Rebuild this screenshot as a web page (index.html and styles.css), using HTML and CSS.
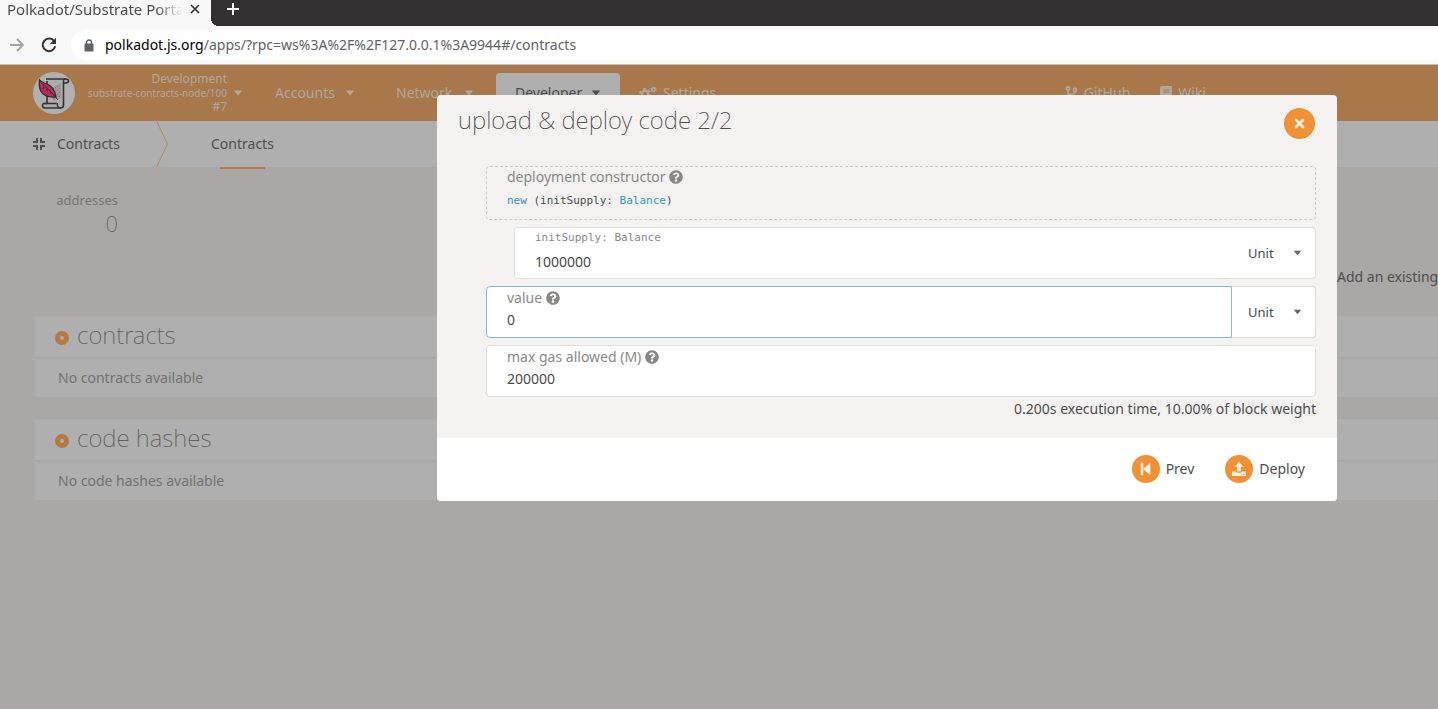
FILE: index.html
```html
<!DOCTYPE html>
<html lang="en">
<head>
<meta charset="utf-8">
<title>Polkadot/Substrate Portal</title>
<link rel="stylesheet" href="styles.css">
</head>
<body>
<svg class="symbols" aria-hidden="true">
  <symbol id="help" viewBox="0 0 512 512"><path d="M504 256c0 137-111 248-248 248S8 393 8 256 119 8 256 8s248 111 248 248zM262.700 90c-54.500 0-89.300 23-116.500 63.800-3.500 5.300-2.400 12.400 2.700 16.300l34.700 26.300c5.200 3.900 12.600 3 16.700-2.100 17.900-22.700 30.100-35.800 57.300-35.800 20.400 0 45.700 13.100 45.700 33 0 15-12.400 22.700-32.500 34C247.100 238.500 216 255 216 296v4c0 6.600 5.400 12 12 12h56c6.600 0 12-5.400 12-12v-1.300c0-28.700 84-29.900 84-107.700 0-58.600-60.800-101-117.300-101zM256 338c-25.400 0-46 20.600-46 46s20.600 46 46 46 46-20.600 46-46-20.600-46-46-46z"/></symbol>
  <symbol id="caret" viewBox="0 0 10 6"><path d="M.8.5h8.400L5 5.500z"/></symbol>
</svg>

<div class="browser">
  <div class="tabstrip">
    <div class="tab"><span class="tab-title">Polkadot/Substrate Portal</span>
      <button class="plain" aria-label="Close tab"><svg width="10" height="10" viewBox="0 0 10 10"><path d="M1 1l8 8M9 1L1 9" fill="none" stroke="#333" stroke-width="1.700"/></svg></button>
    </div>
    <button class="plain newtab" aria-label="New tab"><svg width="14" height="14" viewBox="0 0 14 14"><path d="M7 1v12M1 7h12" fill="none" stroke="#fff" stroke-width="2"/></svg></button>
  </div>
  <div class="toolbar">
    <button class="plain" aria-label="Forward"><svg width="16" height="16" viewBox="0 0 16 16"><path d="M1 8h13M8 2l6 6-6 6" fill="none" stroke="#a5a5a5" stroke-width="1.800"/></svg></button>
    <button class="plain" aria-label="Reload"><svg width="16" height="16" viewBox="0 0 16 16"><path d="M13.200 4.200A6.300 6.300 0 1 0 14.200 9.300" fill="none" stroke="#333" stroke-width="2"/><path d="M15 .8v6.200H8.800z" fill="#333"/></svg></button>
    <div class="address">
      <svg width="10" height="13" viewBox="0 0 10 13"><path d="M2.500 5V3.500a2.500 2.500 0 0 1 5 0V5" fill="none" stroke="#5f6368" stroke-width="1.400"/><rect x="0.500" y="4.500" width="9" height="8" rx="1" fill="#5f6368"/></svg>
      <span><b>polkadot.js.org</b>/apps/?rpc=ws%3A%2F%2F127.0.0.1%3A9944#/contracts</span>
    </div>
  </div>
</div>

<div class="app">
  <header class="header">
    <button class="plain chain">
      <svg class="logo" width="42" height="42" viewBox="0 0 42 42">
        <circle cx="21" cy="21" r="21" fill="#b0b0b0"/>
        <path d="M13 7h19q3.500 0 3.500 2t-3 2H30.500V33q0 3-3 3H12q-2.500 0-2.500-2.500T12 31.500h2V9" fill="#adadad" stroke="#333" stroke-width="1.600" stroke-linejoin="round"/>
        <path d="M12 31.500h12.500V34q1 2 3 2M30.500 11.500V9q0-2 2-2" fill="none" stroke="#333" stroke-width="1.400"/>
        <g fill="#777"><path d="M22 14l6-3v15l-7 3-4-6z" opacity=".35"/><path d="M20 16h1v1h-1zM22 15h1v1h-1zM24 14h1v1h-1zM26 16h1v1h-1zM24 18h1v1h-1zM26 20h1v1h-1zM24 22h1v1h-1zM22 24h1v1h-1zM26 24h1v1h-1zM20 26h1v1h-1z"/></g>
        <path d="M6.500 8q1 1.500 5 3 10 3 11.500 14-11 1-15-5.500-2.500-5-1.500-11.500z" fill="#b52b56" stroke="#3a2830" stroke-width="1.300"/>
        <path d="M8 11q7 5 17 17M14 16v3M17 18l1 4M11 15l-1 2" fill="none" stroke="#3a2830" stroke-width="1"/>
      </svg>
      <span class="chain-info"><span>Development</span><small>substrate-contracts-node/100</small><span>#7</span></span>
      <svg class="caret" width="10" height="6"><use href="#caret"/></svg>
    </button>
    <nav class="menu">
      <a href="#accounts">Accounts <svg class="caret" width="10" height="6"><use href="#caret"/></svg></a>
      <a href="#network">Network <svg class="caret" width="10" height="6"><use href="#caret"/></svg></a>
      <a href="#developer" class="active">Developer <svg class="caret" width="10" height="6"><use href="#caret"/></svg></a>
      <a href="#settings" class="with-icon"><svg width="18" height="15" viewBox="0 0 18 15" fill="none" stroke="#b1a79e"><circle cx="6" cy="8" r="3.200" stroke-width="2.400"/><circle cx="6" cy="8" r="5" stroke-width="2" stroke-dasharray="2.600 2.636"/><circle cx="14.500" cy="3.500" r="1.700" stroke-width="1.500"/><circle cx="14.500" cy="3.500" r="2.700" stroke-dasharray="1.400 1.427"/><circle cx="14.500" cy="12" r="1.700" stroke-width="1.500"/></svg>Settings</a>
    </nav>
    <nav class="external">
      <a href="#github"><svg width="13" height="14" viewBox="0 0 13 14" fill="none" stroke="#b1a79e"><circle cx="3" cy="2.500" r="1.600" stroke-width="1.700"/><circle cx="10" cy="4" r="1.600" stroke-width="1.700"/><circle cx="3" cy="11.500" r="1.600" stroke-width="1.700"/><path d="M3 4v6M10 6q0 2-3 2-4 0-4 2" stroke-width="1.600"/></svg>GitHub</a>
      <a href="#wiki"><svg width="12" height="14" viewBox="0 0 12 14"><path d="M2 0h10v10.500h-1V13h1v1H2q-2 0-2-2V2q0-2 2-2z" fill="#b1a79e"/><path d="M3.500 4h6M3.500 6h6M2 11.500h8" stroke="#a8784a"/></svg>Wiki</a>
    </nav>
  </header>

  <nav class="subtabs">
    <span class="section"><svg width="14" height="14" viewBox="0 0 14 14"><path d="M5 1v4H1M9 1v4h4M5 13V9H1M9 13V9h4" fill="none" stroke="#505050" stroke-width="2"/></svg>Contracts</span>
    <svg class="divider" width="12" height="46" viewBox="0 0 12 46"><path d="M.5 0l11 23-11 23" fill="none" stroke="#b38862"/></svg>
    <a href="#contracts" class="current">Contracts</a>
  </nav>

  <main class="content">
    <dl class="summary"><dt>addresses</dt><dd>0</dd></dl>
    <div class="actions"><button class="plain">Add an existing</button></div>
    <section class="list">
      <h2><i></i>contracts</h2>
      <p>No contracts available</p>
    </section>
    <section class="list">
      <h2><i></i>code hashes</h2>
      <p>No code hashes available</p>
    </section>
  </main>

  <div class="overlay">
    <form class="modal" role="dialog" aria-labelledby="modal-title">
      <div class="modal-head">
        <h1 id="modal-title">upload &amp; deploy code 2/2</h1>
        <button type="button" class="round close" aria-label="Close"><svg width="11" height="11" viewBox="0 0 11 11"><path d="M2 2l7 7M9 2L2 9" fill="none" stroke="#fff1e3" stroke-width="2.600" stroke-linecap="round"/></svg></button>
      </div>
      <div class="modal-body">
        <div class="constructor">
          <span class="label">deployment constructor <svg width="14" height="14"><use href="#help"/></svg></span>
          <code><span class="kw">new</span> (initSupply: <span class="type">Balance</span>)</code>
        </div>
        <div class="field nested">
          <div class="entry"><label class="label mono" for="supply">initSupply: Balance</label><input id="supply" value="1000000"></div>
          <div class="unit"><select aria-label="Supply unit"><option>Unit</option></select><svg width="9" height="6"><use href="#caret"/></svg></div>
        </div>
        <div class="field focus">
          <div class="entry"><label class="label" for="value">value <svg width="14" height="14"><use href="#help"/></svg></label><input id="value" value="0"></div>
          <div class="unit"><select aria-label="Value unit"><option>Unit</option></select><svg width="9" height="6"><use href="#caret"/></svg></div>
        </div>
        <div class="field">
          <div class="entry"><label class="label" for="gas">max gas allowed (M) <svg width="14" height="14"><use href="#help"/></svg></label><input id="gas" value="200000"></div>
        </div>
        <p class="note">0.200s execution time, 10.00% of block weight</p>
      </div>
      <div class="modal-foot">
        <button type="button" class="plain action"><span class="round"><svg width="12" height="14" viewBox="0 0 12 14" fill="#fff1e3"><path d="M1 1h2v12H1zM10 1.500v11L3.500 7z" stroke="#fff1e3" stroke-width=".6" stroke-linejoin="round"/></svg></span>Prev</button>
        <button type="submit" class="plain action"><span class="round"><svg width="14" height="14" viewBox="0 0 14 14" fill="#fff1e3"><path d="M7 0l4.500 4.700H8.800V9.200H5.200V4.700H2.500zM0 9.500h4.200q.3 1.200 1.300 1.200h3q1 0 1.300-1.200H14V14H0z"/><path d="M9.300 12.300h1M11.500 12.300h1" stroke="#f19135"/></svg></span>Deploy</button>
      </div>
    </form>
  </div>
</div>
</body>
</html>
```
FILE: styles.css
```css
* { box-sizing: border-box; }
body {
  margin: 0;
  min-height: 100vh;
  display: flex;
  flex-direction: column;
  font: 14px/20px "Noto Sans", "Open Sans", sans-serif;
  color: #4e4e4e;
  background: #a9a8a6;
  overflow: hidden;
}
h1, h2, p, dl, dd { margin: 0; }
a { color: inherit; text-decoration: none; }
svg { display: block; flex: none; }
.symbols { position: absolute; width: 0; height: 0; }
.plain { border: 0; padding: 0; background: none; font: inherit; color: inherit; }
.caret { fill: currentColor; }

/* Browser frame */
.tabstrip { display: flex; height: 26px; background: #323031; }
.tab {
  display: flex;
  align-items: center;
  gap: 8px;
  width: 211px;
  padding: 0 11px 8px 7px;
  background: #f8f8f8;
  position: relative;
}
.tab::after {
  content: "";
  position: absolute;
  left: 100%;
  bottom: 0;
  width: 8px;
  height: 8px;
  background: radial-gradient(circle at 100% 0, #323031 8px, #f8f8f8 8px);
}
.tab-title {
  flex: 1;
  overflow: hidden;
  white-space: nowrap;
  font-size: 15px;
  -webkit-mask-image: linear-gradient(90deg, #000 85%, transparent);
  mask-image: linear-gradient(90deg, #000 85%, transparent);
}
.newtab { padding: 0 15px 8px; }
.toolbar {
  display: flex;
  align-items: center;
  gap: 16px;
  height: 39px;
  padding-left: 9px;
  background: #f8f8f8;
  border-bottom: 1px solid #bfbfbf;
}
.address {
  flex: 1;
  display: flex;
  align-items: center;
  gap: 11px;
  height: 30px;
  margin-left: -2px;
  padding-left: 13px;
  border-radius: 15px 0 0 15px;
  background: #fff;
  color: #5f6368;
}
.address b { font-weight: 400; color: #000; }

/* App header */
.app { position: relative; flex: 1; }
.header {
  display: flex;
  align-items: center;
  height: 56px;
  padding: 0 232px 0 33px;
  background: #a8784a;
  color: #b1a79e;
}
.chain { display: flex; align-items: center; gap: 6px; width: 223px; }
.chain-info {
  display: flex;
  flex-direction: column;
  flex: none;
  width: 146px;
  text-align: right;
  font-size: 12px;
  line-height: 14px;
}
.chain-info small { font-size: 10px; white-space: nowrap; }
.menu {
  align-self: flex-end;
  display: grid;
  grid-template-columns: 118px 116px 124px auto;
  gap: 3px;
}
.menu a {
  display: flex;
  align-items: center;
  justify-content: space-between;
  height: 48px;
  padding: 0 19px 8px;
}
.menu .active { background: #afafaf; color: #4b4b4b; border-radius: 4px 4px 0 0; }
.menu .with-icon { gap: 6px; padding-left: 16px; }
.external { display: flex; gap: 30px; margin-left: auto; }
.external a { display: flex; align-items: center; gap: 6px; }

/* Section tabs */
.subtabs {
  display: flex;
  height: 47px;
  padding-left: 32px;
  line-height: 46px;
  background: #afafaf;
  border-bottom: 1px solid #a7a8a8;
}
.section { display: flex; align-items: center; gap: 11px; width: 124px; }
.current { position: relative; margin-left: 43px; }
.current::after {
  content: "";
  position: absolute;
  left: 9px;
  right: 9px;
  bottom: -2px;
  height: 2px;
  background: #b47a44;
}

/* Page content */
.content { padding: 22px 0 0 34px; white-space: nowrap; overflow: hidden; }
.summary { width: 84px; text-align: right; font-size: 13px; color: #777675; }
.summary dd { font: 200 22px/26px "Noto Sans", sans-serif; color: #686766; }
.actions { margin: 31px 0 29px 1303px; }
.list { margin-bottom: 22px; color: #727272; }
.list h2 {
  display: flex;
  align-items: center;
  gap: 8px;
  height: 41px;
  padding: 0 0 4px 20px;
  font: 200 24px/34px "Noto Sans", sans-serif;
  color: #606060;
  background: #afafaf;
  border: 1px solid #abacac;
  border-right: 0;
}
.list i {
  width: 14px;
  height: 14px;
  margin-top: 7px;
  border: 5px solid #b47a44;
  border-radius: 50%;
}
.list p {
  height: 38px;
  margin-top: 2px;
  padding-left: 24px;
  line-height: 38px;
  background: #afafaf;
  border-radius: 0 0 0 4px;
}

/* Dialog */
.overlay { position: absolute; inset: 0; padding: 30px 101px 0 437px; }
.modal { border-radius: 4px; background: #f4f3f1; overflow: hidden; }
.modal-head {
  display: flex;
  justify-content: space-between;
  align-items: flex-start;
  padding: 8px 22px 0 21px;
}
h1 { font: 200 24px/34px "Noto Sans", sans-serif; color: #4e4e4e; }
.round {
  display: flex;
  align-items: center;
  justify-content: center;
  width: 28px;
  height: 28px;
  border: 0;
  padding: 0;
  border-radius: 50%;
  background: #f19135;
}
.close { width: 31px; height: 31px; margin-top: 5px; }
.modal-body {
  display: flex;
  flex-direction: column;
  gap: 7px;
  padding: 27px 21px 19px 49px;
}
.label {
  display: flex;
  align-items: center;
  gap: 4px;
  font-size: 14px;
  line-height: 20px;
  color: #8a8a88;
}
.label svg { fill: #878785; }
.constructor {
  height: 54px;
  padding: 0 20px;
  border: 1px dashed #cfcfcd;
  border-radius: 4px;
}
code, .mono { font: 11px/20px "DejaVu Sans Mono", monospace; }
code { display: block; line-height: 28px; }
.kw { color: #3b8fd9; }
.type { color: #2aa1b3; }
.field { display: flex; height: 52px; background: #fff; border-radius: 4px; }
.nested { margin-left: 28px; }
.entry {
  flex: 1;
  padding: 1px 20px 0;
  border: 1px solid #dededf;
  border-radius: 4px;
}
.nested .entry, .focus .entry { border-radius: 4px 0 0 4px; }
.nested .entry { padding-top: 0; border-right-color: transparent; }
.focus .entry { border-color: #85b7d9; }
.entry input {
  display: block;
  width: 100%;
  height: 22px;
  padding: 0;
  border: 0;
  outline: 0;
  background: none;
  font: inherit;
  color: #4a4a4a;
}
.nested .entry input { height: 26px; }
.unit {
  display: flex;
  align-items: center;
  width: 84px;
  padding: 0 13px 0 16px;
  border: 1px solid #dededf;
  border-left: 0;
  border-radius: 0 4px 4px 0;
  fill: #666;
}
.unit select {
  flex: 1;
  appearance: none;
  border: 0;
  padding: 0;
  background: none;
  font: inherit;
  font-size: 13px;
  color: #4a4a4a;
}
.note { text-align: right; margin-top: -5px; line-height: 20px; }
.modal-foot {
  display: flex;
  justify-content: flex-end;
  gap: 31px;
  padding: 17px 32px 18px;
  background: #fff;
}
.action { display: flex; align-items: center; gap: 6px; }
```
